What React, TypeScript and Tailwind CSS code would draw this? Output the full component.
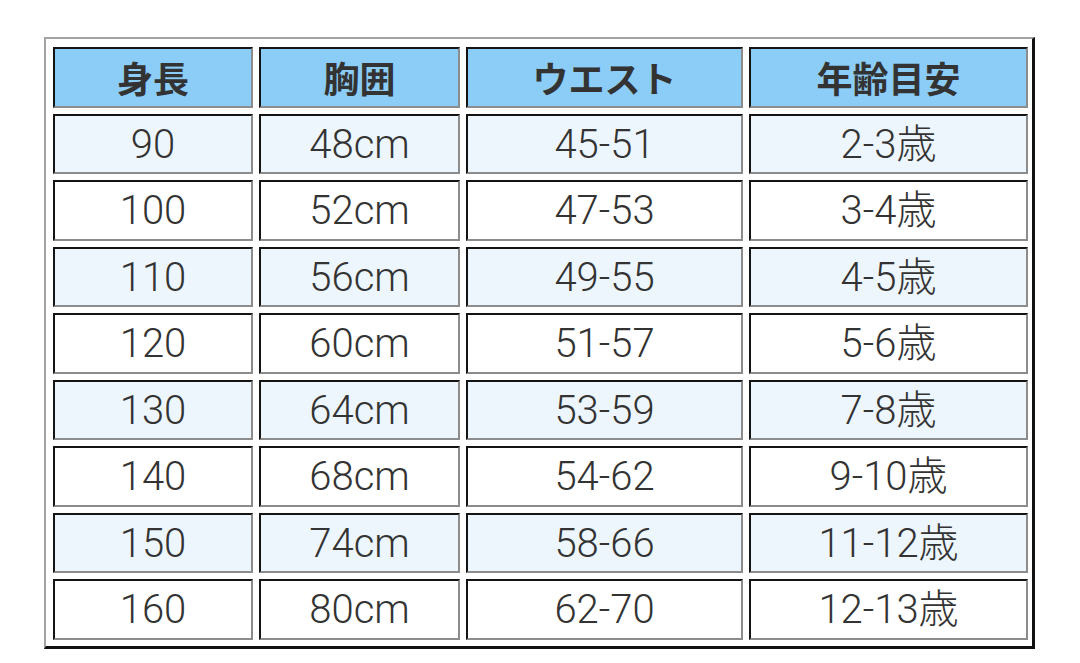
import React from 'react'

const headers = ['身長', '胸囲', 'ウエスト', '年齢目安']

const rows = [
    ['90', '48cm', '45-51', '2-3歳'],
    ['100', '52cm', '47-53', '3-4歳'],
    ['110', '56cm', '49-55', '4-5歳'],
    ['120', '60cm', '51-57', '5-6歳'],
    ['130', '64cm', '53-59', '7-8歳'],
    ['140', '68cm', '54-62', '9-10歳'],
    ['150', '74cm', '58-66', '11-12歳'],
    ['160', '80cm', '62-70', '12-13歳'],
]

const cellBase =
    'flex items-center justify-center border-2 border-t-[#141414] border-l-[#141414] border-b-[#8c8c8c] border-r-[#8c8c8c]'

const App = () => {
    return (
        <div
            className="w-[1080px] h-[663px] bg-white pl-[44px] pt-[37px]"
            style={{ fontFamily: '"Noto Sans CJK JP", "Noto Sans", sans-serif' }}
        >
            <div
                className="w-[991px] h-[612px] border-l-2 border-t-2 border-r-[3px] border-b-[3px]
                    border-l-[#a3a3a3] border-t-[#a3a3a3] border-r-[#111] border-b-[#111]
                    pl-[7px] pt-[8px] pr-[4px] pb-[6px]"
            >
                <div className="grid grid-cols-[200px_201px_277px_279px] auto-rows-[60.5px] gap-[6px]">
                    {headers.map((h) => (
                        <div
                            key={h}
                            className={`${cellBase} bg-[#8ccdf8] text-[36px] font-bold text-[#333] leading-none`}
                        >
                            {h}
                        </div>
                    ))}
                    {rows.map((row, i) =>
                        row.map((c, j) => (
                            <div
                                key={`${i}-${j}`}
                                className={`${cellBase} ${i % 2 === 0 ? 'bg-[#eef6fd]' : 'bg-white'} 
                                    font-['Roboto','Noto_Sans_CJK_JP',sans-serif] font-light
                                    text-[40px] text-[#333] leading-none pt-[2px]`}
                            >
                                {c}
                            </div>
                        ))
                    )}
                </div>
            </div>
        </div>
    )
}

export default App
